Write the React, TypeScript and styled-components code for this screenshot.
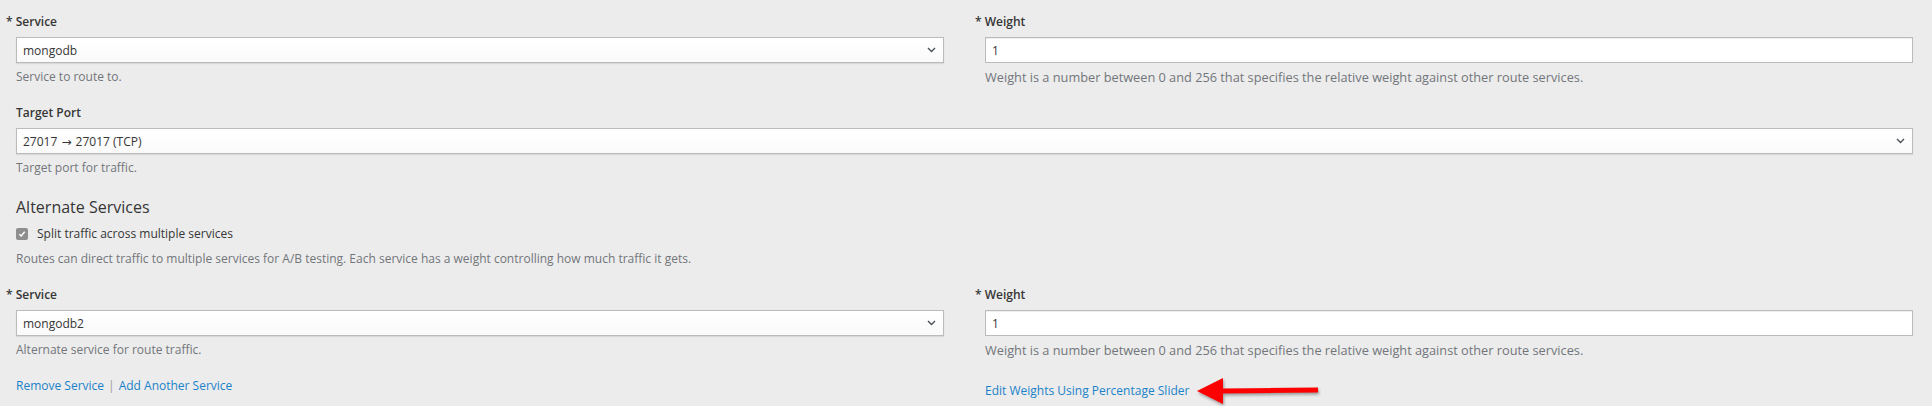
import React from "react";
import styled, { createGlobalStyle } from "styled-components";

const Global = createGlobalStyle`
  html, body { margin: 0; padding: 0; background: #ececec; }
  body {
    font-family: "Open Sans", "Noto Sans", "Liberation Sans", sans-serif;
    font-size: 12px;
    color: #363636;
  }
  * { box-sizing: border-box; }
`;

const Page = styled.div`
  width: 1932px;
  height: 406px;
  padding: 12px 19px 0 16px;
  background: #ececec;
  display: flex;
  flex-direction: column;
`;

const TwoCols = styled.div`
  display: grid;
  grid-template-columns: 1fr 1fr;
  column-gap: 41px;
`;

const FormGroup = styled.div<{ $mb?: number }>`
  display: flex;
  flex-direction: column;
  margin-bottom: ${(p) => (p.$mb ?? 17)}px;
`;

const Label = styled.label<{ $required?: boolean }>`
  font-weight: 600;
  font-size: 12px;
  line-height: 20px;
  margin-bottom: 5px;
  color: #363636;
  &::before {
    content: ${(p) => (p.$required ? '"* "' : '""')};
    margin-left: ${(p) => (p.$required ? "-10px" : "0")};
  }
`;

const Field = styled.div`
  height: 26px;
  border: 1px solid #bbbbbb;
  background: #fff;
  box-shadow: inset 0 1px 1px rgba(3, 3, 3, 0.075);
  display: flex;
  align-items: center;
  padding: 0 6px;
  font-size: 12px;
  color: #363636;
`;

const SelectBox = styled(Field)`
  justify-content: space-between;
  background: linear-gradient(#ffffff, #fafafa);
  box-shadow: 0 1px 1px rgba(3, 3, 3, 0.08);
  padding-right: 7px;
`;

const ArrowGlyph = styled.span`
  font-family: "DejaVu Sans", sans-serif;
  font-size: 12px;
  margin: 0 1px;
`;

const Help = styled.div<{ $size?: number }>`
  margin-top: 5px;
  line-height: 18px;
  color: #72767b;
  font-size: ${(p) => p.$size ?? 12}px;
`;

const Heading = styled.h3`
  margin: 19px 0 6px;
  font-size: 16px;
  font-weight: 400;
  line-height: 22px;
  color: #363636;
`;

const CheckRow = styled.label`
  display: flex;
  align-items: center;
  gap: 9px;
  line-height: 20px;
  color: #363636;
`;

const CheckBox = styled.span`
  width: 12px;
  height: 12px;
  border-radius: 2px;
  background: #8e8e8e;
  display: inline-flex;
  align-items: center;
  justify-content: center;
`;

const SectionHelp = styled.div`
  margin: 6px 0 17px;
  line-height: 18px;
  color: #72767b;
`;

const LinkRow = styled.div`
  display: flex;
  align-items: center;
  gap: 3px;
  margin-top: 18px;
  line-height: 18px;
`;

const Link = styled.a`
  color: #1b82c9;
  text-decoration: none;
  cursor: pointer;
`;

const Sep = styled.span`
  color: #9c9c9c;
  padding: 0 1px;
`;

const Arrow = styled.svg`
  margin-left: 5px;
  filter: drop-shadow(1px 2px 1.5px rgba(0, 0, 0, 0.35));
  overflow: visible;
`;

const Chevron = () => (
  <svg width="9" height="6" viewBox="0 0 9 6">
    <path d="M1 1 L4.5 4.5 L8 1" fill="none" stroke="#4d5258" strokeWidth="1.4" />
  </svg>
);

const Select = ({ children }: { children: React.ReactNode }) => (
  <SelectBox>
    <span>{children}</span>
    <Chevron />
  </SelectBox>
);

const weightHelp =
  "Weight is a number between 0 and 256 that specifies the relative weight against other route services.";

export default function App() {
  return (
    <>
      <Global />
      <Page>
        <TwoCols>
          <FormGroup>
            <Label $required>Service</Label>
            <Select>mongodb</Select>
            <Help>Service to route to.</Help>
          </FormGroup>
          <FormGroup>
            <Label $required>Weight</Label>
            <Field>1</Field>
            <Help $size={12.75}>{weightHelp}</Help>
          </FormGroup>
        </TwoCols>

        <FormGroup $mb={0}>
          <Label>Target Port</Label>
          <Select>
            27017 <ArrowGlyph>→</ArrowGlyph> 27017 (TCP)
          </Select>
          <Help>Target port for traffic.</Help>
        </FormGroup>

        <Heading>Alternate Services</Heading>
        <CheckRow>
          <CheckBox>
            <svg width="8" height="8" viewBox="0 0 8 8">
              <path d="M1.3 4.2 L3.2 6 L6.7 1.8" fill="none" stroke="#fff" strokeWidth="1.5" />
            </svg>
          </CheckBox>
          Split traffic across multiple services
        </CheckRow>
        <SectionHelp>
          Routes can direct traffic to multiple services for A/B testing. Each service has a weight controlling how much traffic it gets.
        </SectionHelp>

        <TwoCols>
          <FormGroup $mb={0}>
            <Label $required>Service</Label>
            <Select>mongodb2</Select>
            <Help>Alternate service for route traffic.</Help>
            <LinkRow>
              <Link>Remove Service</Link>
              <Sep>|</Sep>
              <Link>Add Another Service</Link>
            </LinkRow>
          </FormGroup>
          <FormGroup $mb={0}>
            <Label $required>Weight</Label>
            <Field>1</Field>
            <Help $size={12.75}>{weightHelp}</Help>
            <LinkRow>
              <Link>Edit Weights Using Percentage Slider</Link>
              <Arrow width="122" height="28" viewBox="0 0 122 28">
                <path d="M0 14 L26 1 L26 11.5 L121 10.5 L121 15.5 L26 16.5 L26 27 Z" fill="#ff0000" />
              </Arrow>
            </LinkRow>
          </FormGroup>
        </TwoCols>
      </Page>
    </>
  );
}
